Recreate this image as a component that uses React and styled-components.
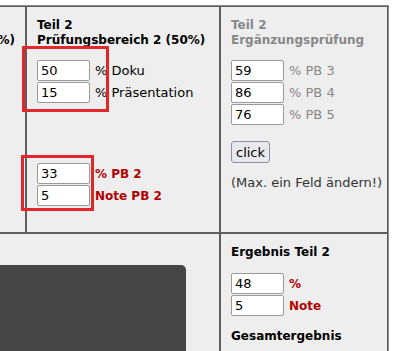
import React from "react"
import styled, { createGlobalStyle } from "styled-components"

const GlobalStyle = createGlobalStyle`
  html, body {
    margin: 0;
    padding: 0;
    background: #fff;
    overflow: hidden;
  }
  body {
    font-family: "DejaVu Sans", Verdana, sans-serif;
    font-size: 13px;
    color: #000;
  }
`

const Page = styled.div`
  width: 389px;
  padding-top: 5px;
  display: flex;
  justify-content: flex-end;
`

const Table = styled.div`
  flex-shrink: 0;
  display: grid;
  grid-template-columns: max-content 194px 168px;
  grid-template-rows: 227px 200px;
  border: 1px solid #8a8a8a;
`

const Cell = styled.div`
  position: relative;
  background: #eee;
  border: 1px solid #5e5e5e;
  padding: 11px 10px;
  grid-column: ${(p) => (p.$span ? `span ${p.$span}` : "auto")};
`

const Heading = styled.div`
  font-weight: bold;
  font-size: 12px;
  line-height: 15px;
  white-space: nowrap;
  color: ${(p) => (p.$muted ? "#888" : "#000")};
`

const Fields = styled.div`
  margin-top: ${(p) => p.$top}px;
  display: flex;
  flex-direction: column;
  gap: 1px;
`

const Field = styled.label`
  display: flex;
  align-items: center;
  gap: 5px;
  height: 21px;
  white-space: nowrap;
`

const Input = styled.input`
  box-sizing: border-box;
  width: 53px;
  height: 21px;
  margin: 0;
  padding: 0 3px;
  border: 1px solid #9a9a9a;
  border-radius: 2px;
  background: #fff;
  color: #000;
  font: 13px "DejaVu Sans", Verdana, sans-serif;
`

const Label = styled.span`
  color: ${(p) =>
    p.$tone === "red" ? "#b00000" : p.$tone === "muted" ? "#888" : "#000"};
  font-weight: ${(p) => (p.$tone === "red" ? "bold" : "normal")};
  font-size: ${(p) => (p.$tone === "red" ? "12px" : "13px")};
`

const Button = styled.button`
  display: block;
  margin-top: 16px;
  height: 22px;
  padding: 0 4px;
  border: 1px solid #8f8f9d;
  border-radius: 3px;
  background: #e9e9ed;
  color: #000;
  font: 13px "DejaVu Sans", Verdana, sans-serif;
`

const Note = styled.div`
  margin-top: 12px;
  line-height: 15px;
  color: #333;
  white-space: nowrap;
`

const Marker = styled.div`
  position: absolute;
  box-sizing: border-box;
  border: 3px solid #e3262b;
  pointer-events: none;
`

const DarkPanel = styled.div`
  margin: 20px 23px 0 0;
  height: 140px;
  background: #454545;
  border-radius: 0 5px 0 0;
`

const Spacer = styled.div`
  height: ${(p) => p.$h}px;
`

const Row = ({ value, label, tone }) => (
  <Field>
    <Input defaultValue={value} />
    <Label $tone={tone}>{label}</Label>
  </Field>
)

export default function App() {
  return (
    <>
      <GlobalStyle />
      <Page>
        <Table>
          <Cell>
            <Heading>Teil 1</Heading>
            <Heading>Prüfungsbereich 1 (50%)</Heading>
            <Fields $top={12}>
              <Row value="72" label="% PB 1" tone="red" />
              <Row value="3" label="Note PB 1" tone="red" />
            </Fields>
          </Cell>

          <Cell>
            <Heading>Teil 2</Heading>
            <Heading>Prüfungsbereich 2 (50%)</Heading>
            <Fields $top={12}>
              <Row value="50" label="% Doku" />
              <Row value="15" label="% Präsentation" />
            </Fields>
            <Fields $top={60}>
              <Row value="33" label="% PB 2" tone="red" />
              <Row value="5" label="Note PB 2" tone="red" />
            </Fields>
            <Marker style={{ left: -5, top: 39, width: 87, height: 66 }} />
            <Marker style={{ left: -6, top: 148, width: 73, height: 56 }} />
          </Cell>

          <Cell>
            <Heading $muted>Teil 2</Heading>
            <Heading $muted>Ergänzungsprüfung</Heading>
            <Fields $top={12}>
              <Row value="59" label="% PB 3" tone="muted" />
              <Row value="86" label="% PB 4" tone="muted" />
              <Row value="76" label="% PB 5" tone="muted" />
            </Fields>
            <Button type="button">click</Button>
            <Note>(Max. ein Feld ändern!)</Note>
          </Cell>

          <Cell $span={2}>
            <DarkPanel />
          </Cell>

          <Cell>
            <Heading>Ergebnis Teil 2</Heading>
            <Fields $top={13}>
              <Row value="48" label="%" tone="red" />
              <Row value="5" label="Note" tone="red" />
            </Fields>
            <Spacer $h={13} />
            <Heading>Gesamtergebnis</Heading>
            <Fields $top={13}>
              <Row value="60" label="%" tone="red" />
              <Row value="4" label="Note" tone="red" />
            </Fields>
          </Cell>
        </Table>
      </Page>
    </>
  )
}
